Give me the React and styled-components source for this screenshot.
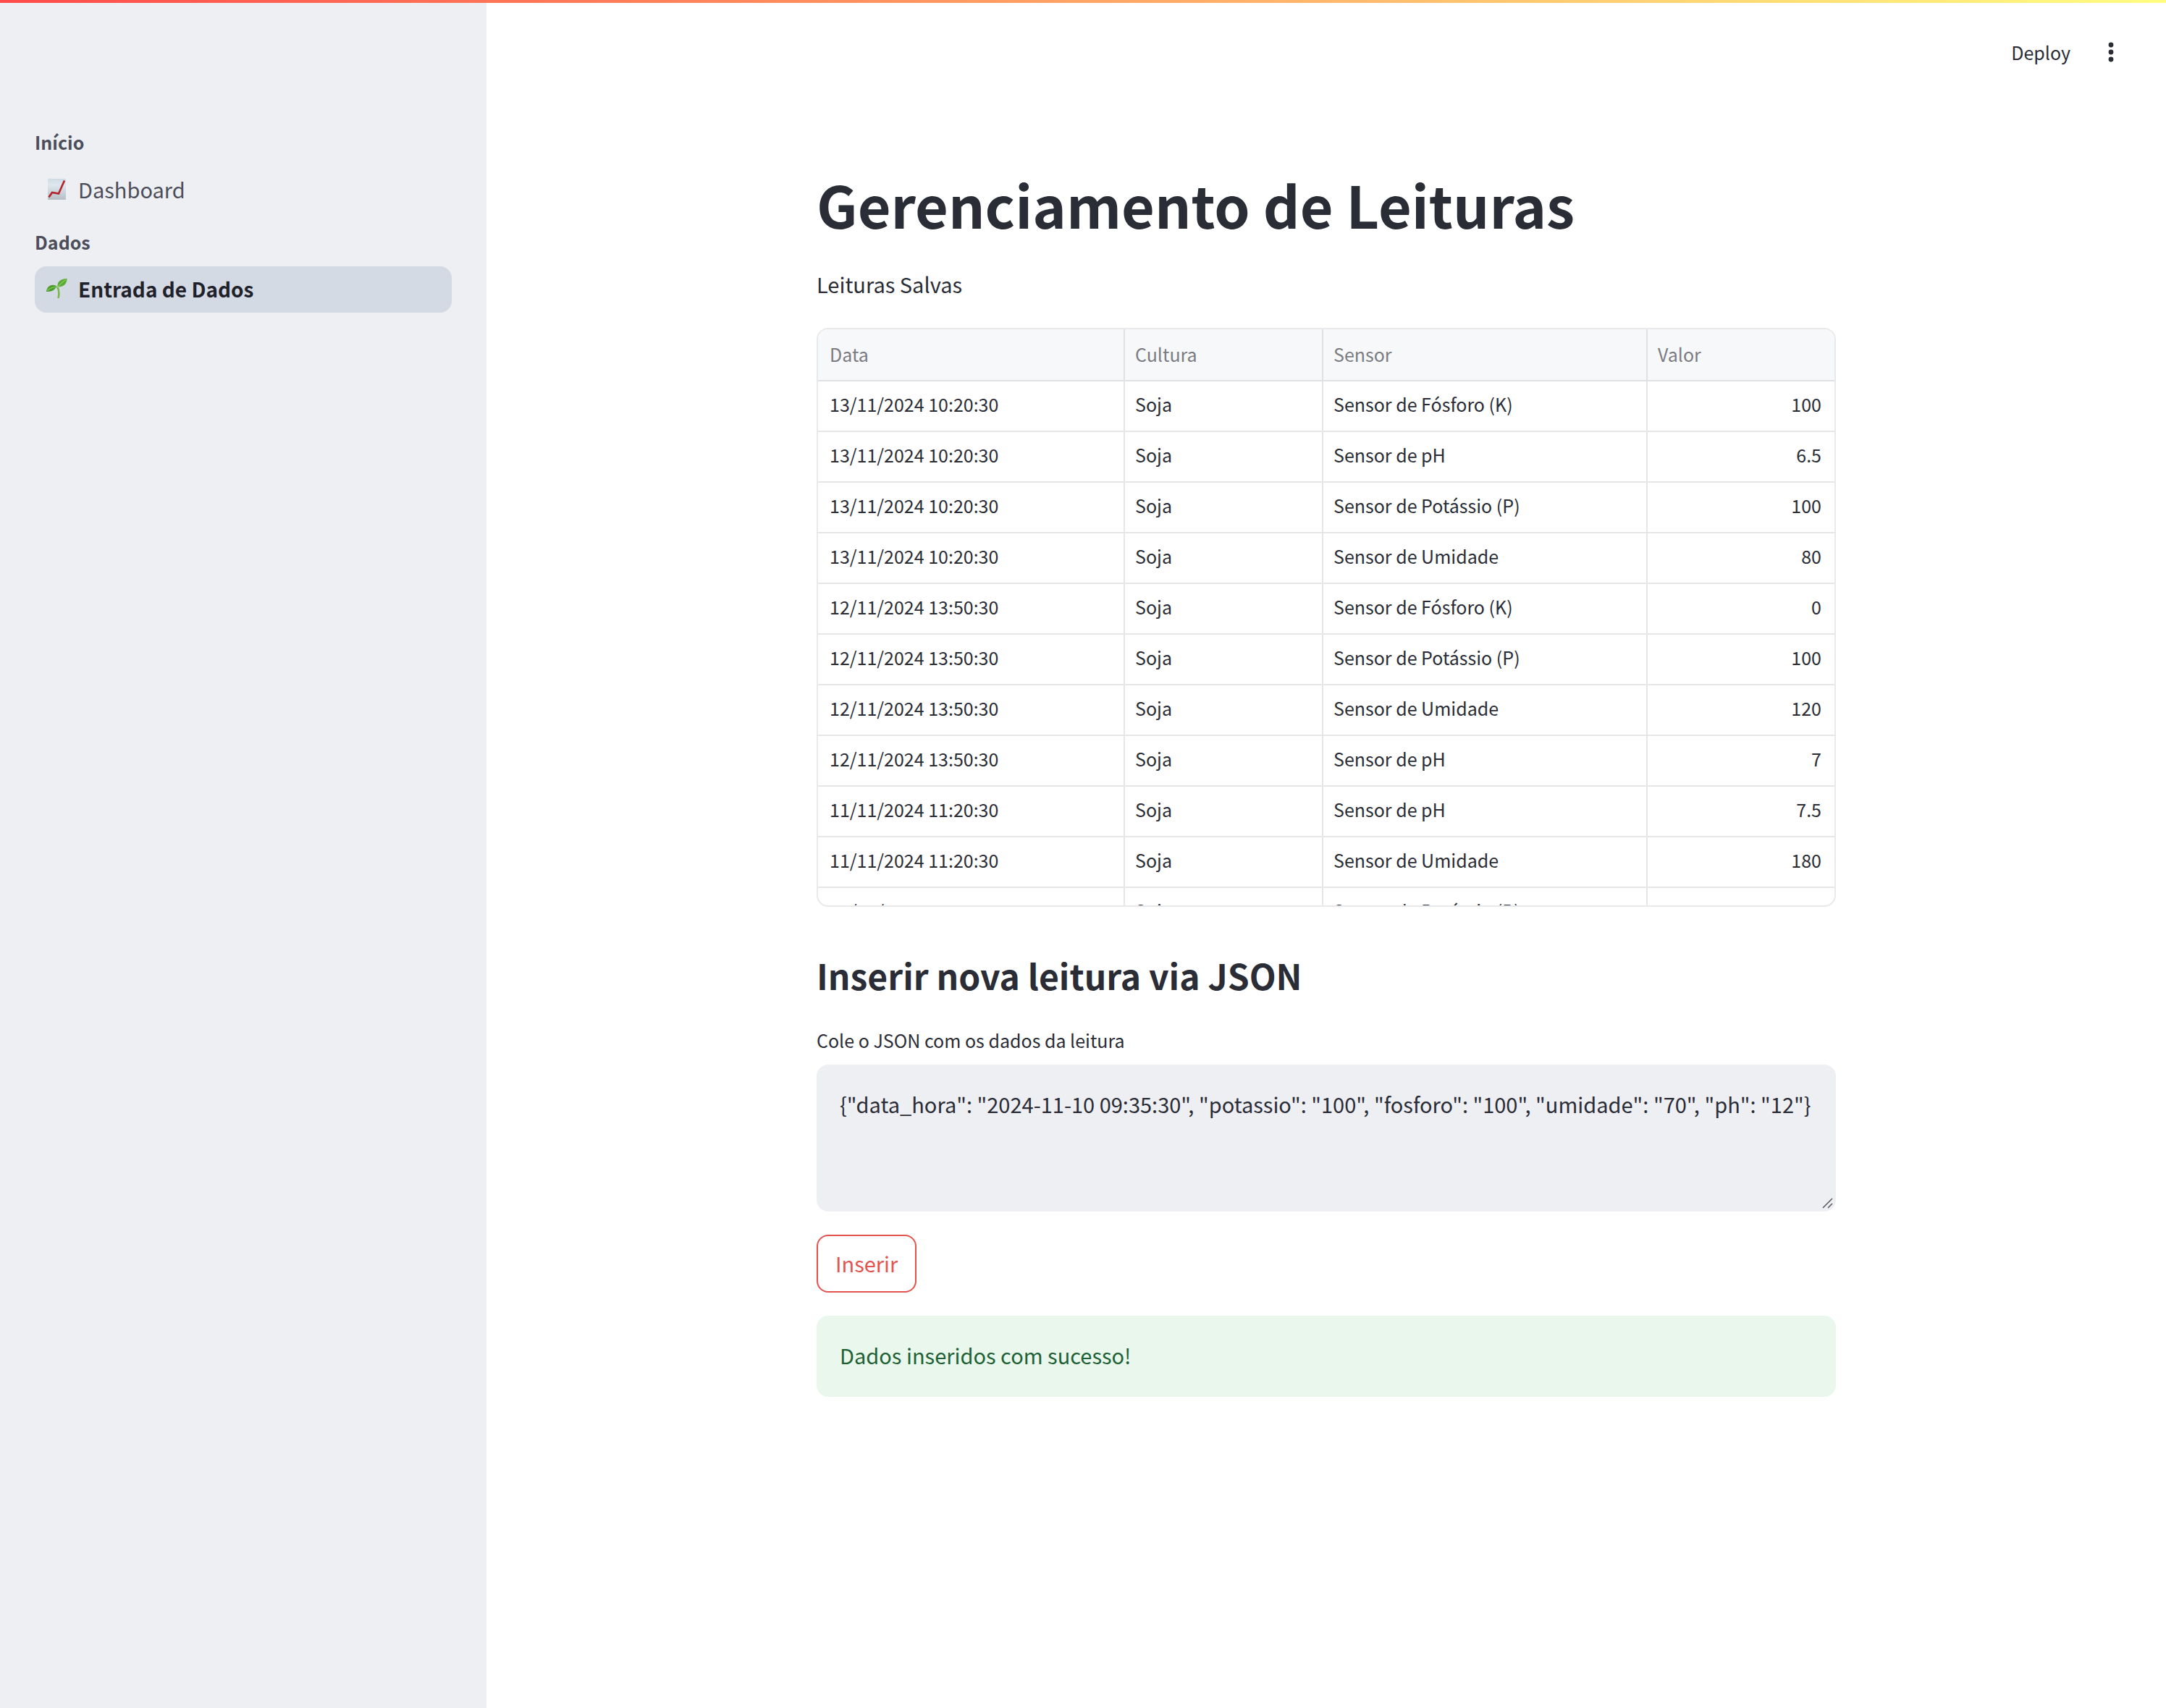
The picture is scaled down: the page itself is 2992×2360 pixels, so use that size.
import React, { useState } from "react";
import styled, { createGlobalStyle } from "styled-components";

const GlobalStyle = createGlobalStyle`
  *, *::before, *::after { box-sizing: border-box; }
  body {
    margin: 0;
    background: #ffffff;
    color: #2a2c36;
    font-family: "Noto Sans CJK SC", "Noto Sans", sans-serif;
    font-size: 29px;
    line-height: 52px;
  }
  h1, h2, p, ul { margin: 0; padding: 0; }
  button, textarea { font: inherit; color: inherit; }
`;

const Page = styled.div`
  display: flex;
  min-height: 100vh;
`;

const TopStripe = styled.div`
  position: fixed;
  inset: 0 0 auto 0;
  height: 4px;
  background: linear-gradient(90deg, #ff4b4b, #fffd80);
  z-index: 2;
`;

const Sidebar = styled.aside`
  flex: 0 0 672px;
  padding: 176px 48px 48px;
  background: #eeeff3;
`;

const NavGroup = styled.section`
  padding-bottom: 20px;
`;

const NavHeading = styled.h2`
  font-size: 25px;
  font-weight: 600;
  line-height: 40px;
  color: #4b4e5a;
  padding-bottom: 14px;
`;

const NavList = styled.ul`
  list-style: none;
`;

const NavLink = styled.a`
  display: flex;
  align-items: center;
  gap: 14px;
  height: 64px;
  padding: 0 14px 2px;
  border-radius: 16px;
  text-decoration: none;
  font-size: ${(p) => (p.$active ? 28 : 29)}px;
  font-weight: ${(p) => (p.$active ? 600 : 400)};
  color: ${(p) => (p.$active ? "#1f212b" : "#4b4e5a")};
  background: ${(p) => (p.$active ? "#d4dae4" : "transparent")};
`;

const NavIcon = styled.svg`
  width: 32px;
  height: 32px;
  flex: none;
`;

const Main = styled.main`
  flex: 1;
  min-width: 0;
`;

const Toolbar = styled.header`
  display: flex;
  justify-content: flex-end;
  align-items: center;
  gap: 32px;
  height: 144px;
  padding: 0 60px;
`;

const ToolButton = styled.button`
  display: flex;
  align-items: center;
  justify-content: center;
  min-width: 32px;
  height: 48px;
  padding: 0 8px;
  border: 0;
  background: transparent;
  font-size: 25px;
  line-height: 40px;
  cursor: pointer;
`;

const Content = styled.div`
  max-width: 1408px;
  margin: 0 auto;
  padding: 84px 0;
`;

const Title = styled.h1`
  font-size: 79px;
  font-weight: 700;
  line-height: 108px;
  padding-bottom: 30px;
`;

const Text = styled.p`
  padding-bottom: 35px;
`;

const TableFrame = styled.div`
  height: 800px;
  overflow-y: auto;
  scrollbar-width: none;
  border: 2px solid #e8e9eb;
  border-radius: 16px;
`;

const Table = styled.table`
  width: 100%;
  table-layout: fixed;
  border-collapse: separate;
  border-spacing: 0;
  font-size: 25px;
  line-height: 40px;
`;

const Col = styled.col`
  width: ${(p) => p.$width || "auto"};
`;

const HeadCell = styled.th`
  height: 72px;
  padding: 0 18px 2px 14px;
  text-align: left;
  font-weight: 400;
  color: #7b7c82;
  background: #f7f8fa;
  border-bottom: 2px solid #e0e1e4;
  border-right: 2px solid #e0e1e4;
  &:first-child { padding-left: 16px; }
  &:last-child { border-right: 0; }
`;

const Cell = styled.td`
  height: 70px;
  padding: 0 18px 6px 14px;
  text-align: ${(p) => (p.$numeric ? "right" : "left")};
  border-bottom: 2px solid #e6e6e8;
  border-right: 2px solid #e6e6e8;
  &:first-child { padding-left: 16px; }
  &:last-child { border-right: 0; }
`;

const Subtitle = styled.h2`
  font-size: 48px;
  font-weight: 600;
  line-height: 68px;
  padding: 60px 0 36px;
`;

const Form = styled.form`
  display: flex;
  flex-direction: column;
  align-items: flex-start;
  padding-bottom: 32px;
`;

const Label = styled.label`
  font-size: 25px;
  line-height: 40px;
  padding-bottom: 14px;
`;

const AreaFrame = styled.div`
  position: relative;
  width: 100%;
  margin-bottom: 32px;
`;

const TextArea = styled.textarea`
  display: block;
  width: 100%;
  height: 203px;
  padding: 28px 32px;
  border: 0;
  border-radius: 16px;
  background: #eeeff3;
  resize: none;
  outline: 0;
`;

const Grip = styled.svg`
  position: absolute;
  right: 2px;
  bottom: 2px;
  width: 18px;
  height: 18px;
  pointer-events: none;
`;

const SubmitButton = styled.button`
  height: 80px;
  padding: 0 24px 2px;
  border: 2px solid #e5534f;
  border-radius: 16px;
  background: #ffffff;
  color: #e5534f;
  cursor: pointer;
`;

const Alert = styled.div`
  padding: 28px 32px 32px;
  border-radius: 16px;
  background: #e9f7ed;
  color: #1e6134;
`;

function ChartIcon() {
  return (
    <NavIcon viewBox="0 0 32 32" aria-hidden="true">
      <defs>
        <linearGradient id="sheet" x1="0" y1="0" x2="0" y2="1">
          <stop offset="0" stopColor="#cfdbe4" />
          <stop offset="0.3" stopColor="#dfe7ee" />
          <stop offset="1" stopColor="#b6bfc5" />
        </linearGradient>
      </defs>
      <rect x="4" y="2" width="25" height="29" fill="url(#sheet)" />
      <path d="M5.500 27.500L10 21L19 22.500L27 4.500" fill="none" stroke="#b3242c" strokeWidth="2.600" />
    </NavIcon>
  );
}

function SeedlingIcon() {
  return (
    <NavIcon viewBox="0 0 32 32" aria-hidden="true">
      <path d="M17.500 14C19.500 18 20 23 18.500 29" fill="none" stroke="#79b84a" strokeWidth="2.600" />
      <path d="M17.500 13.500C17 6 21 2.500 30.500 2C30.500 9 26 13.500 17.500 13.500Z" fill="#5aab35" />
      <path d="M17.500 14C14 8.500 3 9.500 2 20C8 20 12.500 19 15 14.500Z" fill="#4c9f2f" />
      <path d="M18 13C21 9.500 25 6 29 3.500M16.500 13.500C11 13.500 7 15 3.500 18.500" fill="none" stroke="#8ccc58" strokeWidth="1.200" />
    </NavIcon>
  );
}

const rows = [
  ["13/11/2024 10:20:30", "Soja", "Sensor de Fósforo (K)", "100"],
  ["13/11/2024 10:20:30", "Soja", "Sensor de pH", "6.5"],
  ["13/11/2024 10:20:30", "Soja", "Sensor de Potássio (P)", "100"],
  ["13/11/2024 10:20:30", "Soja", "Sensor de Umidade", "80"],
  ["12/11/2024 13:50:30", "Soja", "Sensor de Fósforo (K)", "0"],
  ["12/11/2024 13:50:30", "Soja", "Sensor de Potássio (P)", "100"],
  ["12/11/2024 13:50:30", "Soja", "Sensor de Umidade", "120"],
  ["12/11/2024 13:50:30", "Soja", "Sensor de pH", "7"],
  ["11/11/2024 11:20:30", "Soja", "Sensor de pH", "7.5"],
  ["11/11/2024 11:20:30", "Soja", "Sensor de Umidade", "180"],
  ["11/11/2024 11:20:30", "Soja", "Sensor de Potássio (P)", ""],
];

export default function App() {
  const [json, setJson] = useState(
    '{"data_hora": "2024-11-10 09:35:30", "potassio": "100", "fosforo": "100", "umidade": "70", "ph": "12"}'
  );
  return (
    <>
      <GlobalStyle />
      <TopStripe />
      <Page>
        <Sidebar>
          <nav>
            <NavGroup>
              <NavHeading>Início</NavHeading>
              <NavList>
                <li>
                  <NavLink href="#dashboard"><ChartIcon />Dashboard</NavLink>
                </li>
              </NavList>
            </NavGroup>
            <NavGroup>
              <NavHeading>Dados</NavHeading>
              <NavList>
                <li>
                  <NavLink href="#entrada" $active aria-current="page"><SeedlingIcon />Entrada de Dados</NavLink>
                </li>
              </NavList>
            </NavGroup>
          </nav>
        </Sidebar>
        <Main>
          <Toolbar>
            <ToolButton type="button">Deploy</ToolButton>
            <ToolButton type="button" aria-label="Menu">
              <svg width="16" height="32" viewBox="0 0 16 32" fill="#2a2c36">
                <circle cx="8" cy="6" r="3.400" />
                <circle cx="8" cy="16" r="3.400" />
                <circle cx="8" cy="26" r="3.400" />
              </svg>
            </ToolButton>
          </Toolbar>
          <Content>
            <Title>Gerenciamento de Leituras</Title>
            <Text>Leituras Salvas</Text>
            <TableFrame>
              <Table>
                <colgroup>
                  <Col $width="424px" />
                  <Col $width="274px" />
                  <Col $width="448px" />
                  <Col />
                </colgroup>
                <thead>
                  <tr>
                    {["Data", "Cultura", "Sensor", "Valor"].map((h) => (
                      <HeadCell key={h} scope="col">{h}</HeadCell>
                    ))}
                  </tr>
                </thead>
                <tbody>
                  {rows.map((row, i) => (
                    <tr key={i}>
                      {row.map((value, j) => (
                        <Cell key={j} $numeric={j === 3}>{value}</Cell>
                      ))}
                    </tr>
                  ))}
                </tbody>
              </Table>
            </TableFrame>
            <Subtitle>Inserir nova leitura via JSON</Subtitle>
            <Form onSubmit={(e) => e.preventDefault()}>
              <Label htmlFor="leitura-json">Cole o JSON com os dados da leitura</Label>
              <AreaFrame>
                <TextArea
                  id="leitura-json"
                  spellCheck={false}
                  value={json}
                  onChange={(e) => setJson(e.target.value)}
                />
                <Grip viewBox="0 0 18 18" aria-hidden="true">
                  <path d="M2 15L15 2M9 15L15 9" stroke="#55565c" strokeWidth="1.500" />
                </Grip>
              </AreaFrame>
              <SubmitButton type="submit">Inserir</SubmitButton>
            </Form>
            <Alert role="alert">Dados inseridos com sucesso!</Alert>
          </Content>
        </Main>
      </Page>
    </>
  );
}
